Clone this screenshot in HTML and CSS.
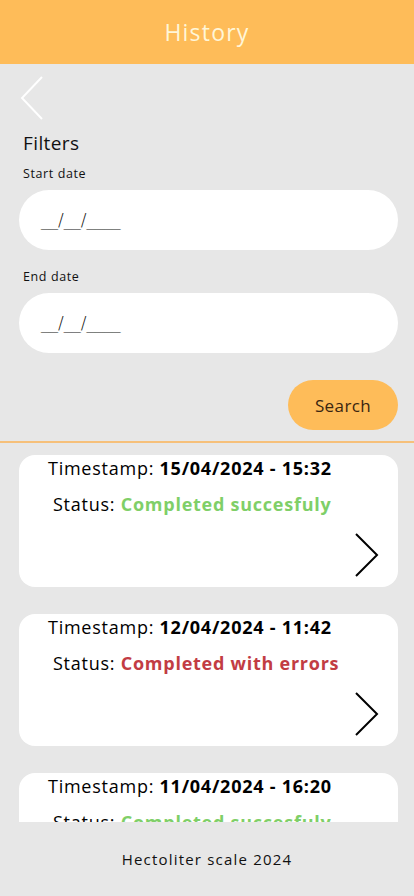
FILE: index.html
```html
<!DOCTYPE html>
<html lang="en">
<head>
<meta charset="utf-8">
<title>History</title>
<link rel="stylesheet" href="styles.css">
</head>
<body>
<div class="app">
  <header class="topbar"><h1 class="title">History</h1></header>
  <section class="filters">
    <svg class="back" width="26" height="46" viewBox="0 0 26 46"><path d="M23 2 L3 23 L23 44" fill="none" stroke="#ffffff" stroke-width="2"/></svg>
    <h2 class="filters-title">Filters</h2>
    <label class="field-label">Start date</label>
    <div class="date-input">__/__/____</div>
    <label class="field-label">End date</label>
    <div class="date-input">__/__/____</div>
    <div class="actions"><button class="search-btn">Search</button></div>
  </section>
  <section class="list">
    <div class="card">
      <p class="ts">Timestamp: <b>15/04/2024 - 15:32</b></p>
      <p class="status">Status: <b class="ok">Completed succesfuly</b></p>
      <svg class="go" width="26" height="46" viewBox="0 0 26 46"><path d="M2 2 L23 23 L2 44" fill="none" stroke="#000" stroke-width="2"/></svg>
    </div>
    <div class="card">
      <p class="ts">Timestamp: <b>12/04/2024 - 11:42</b></p>
      <p class="status">Status: <b class="err">Completed with errors</b></p>
      <svg class="go" width="26" height="46" viewBox="0 0 26 46"><path d="M2 2 L23 23 L2 44" fill="none" stroke="#000" stroke-width="2"/></svg>
    </div>
    <div class="card">
      <p class="ts">Timestamp: <b>11/04/2024 - 16:20</b></p>
      <p class="status">Status: <b class="ok">Completed succesfuly</b></p>
      <svg class="go" width="26" height="46" viewBox="0 0 26 46"><path d="M2 2 L23 23 L2 44" fill="none" stroke="#000" stroke-width="2"/></svg>
    </div>
  </section>
  <footer class="footer">Hectoliter scale 2024</footer>
</div>
</body>
</html>
```
FILE: styles.css
```css
* { box-sizing: border-box; }
html, body { margin: 0; padding: 0; }
body {
  background: #e7e7e7;
  font-family: "Open Sans", "Noto Sans", sans-serif;
  color: #111;
}
.app {
  height: 896px;
  display: flex;
  flex-direction: column;
  overflow: hidden;
}
.topbar {
  height: 64px;
  flex: none;
  background: #febc59;
  display: flex;
  align-items: center;
  justify-content: center;
}
.title {
  margin: 0;
  font-size: 23px;
  font-weight: 400;
  color: #fff6d8;
  letter-spacing: 1.2px;
}
.filters {
  flex: none;
  padding: 11px 16px 11px 19px;
  display: flex;
  flex-direction: column;
}
.back { display: block; }
.filters-title {
  margin: 10px 0 4px 4px;
  font-size: 19px;
  font-weight: 400;
  line-height: 24px;
  letter-spacing: 0.4px;
}
.field-label {
  margin: 6px 0 0 4px;
  font-size: 12.5px;
  line-height: 18px;
  letter-spacing: 0.6px;
}
.date-input {
  margin: 7px 0 12px 0;
  height: 60px;
  border-radius: 30px;
  background: #fff;
  padding-left: 22px;
  display: flex;
  align-items: center;
  font-family: "DejaVu Sans", sans-serif;
  font-weight: 200;
  font-size: 17px;
  letter-spacing: 0;
  color: #111;
}
.actions {
  display: flex;
  justify-content: flex-end;
  margin-top: 15px;
}
.search-btn {
  width: 110px;
  height: 50px;
  border: none;
  border-radius: 25px;
  background: #febc59;
  font-family: inherit;
  font-size: 17px;
  letter-spacing: 0.4px;
  color: #3a2510;
}
.list {
  flex: 1;
  min-height: 0;
  overflow: hidden;
  border-top: 2px solid #f6c07a;
  padding: 12px 16px 0 19px;
  display: flex;
  flex-direction: column;
  gap: 27px;
}
.card {
  flex: none;
  height: 132px;
  background: #fff;
  border-radius: 16px;
  padding: 0 18px 9px 29px;
  display: flex;
  flex-direction: column;
}
.ts {
  margin: 0;
  font-size: 18px;
  line-height: 26px;
  color: #000;
  letter-spacing: 0.75px;
}
.ts b { font-weight: 700; }
.status {
  margin: 10px 0 0 5px;
  font-size: 18px;
  line-height: 26px;
  color: #000;
  letter-spacing: 0.75px;
}
.ok { color: #7fcf68; font-weight: 700; }
.err { color: #c23c43; font-weight: 700; }
.go {
  margin-top: auto;
  align-self: flex-end;
  display: block;
}
.footer {
  flex: none;
  height: 74px;
  display: flex;
  align-items: center;
  justify-content: center;
  font-size: 15px;
  letter-spacing: 1.2px;
  color: #111;
}
```
